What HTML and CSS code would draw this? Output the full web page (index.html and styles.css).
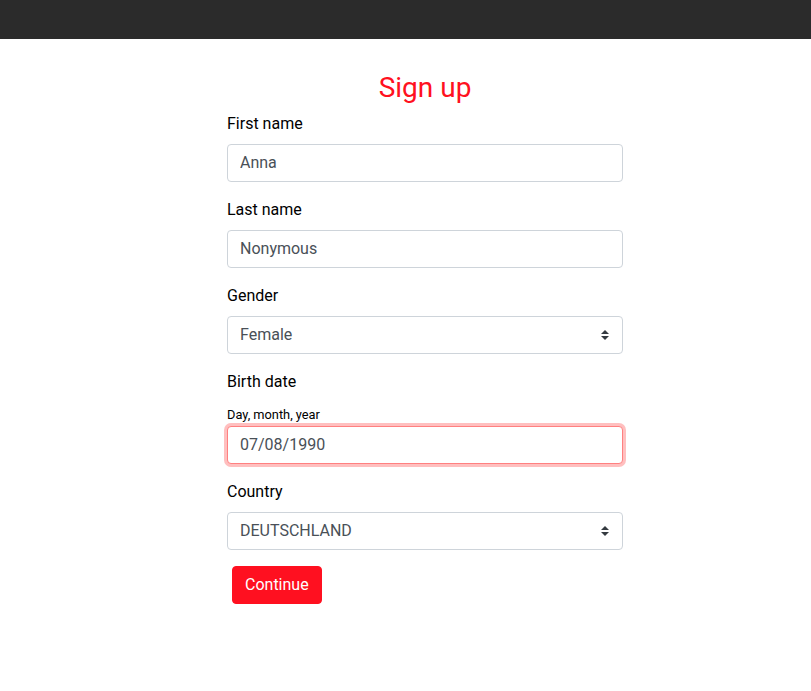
FILE: index.html
```html
<!DOCTYPE html>
<html lang="en">
<head>
<meta charset="utf-8">
<title>Sign up</title>
<link rel="stylesheet" href="styles.css">
</head>
<body>
<header class="topbar"></header>
<main class="page">
  <form class="signup">
    <h1 class="title">Sign up</h1>
    <div class="group">
      <label class="label" for="first">First name</label>
      <input class="control" id="first" type="text" value="Anna">
    </div>
    <div class="group">
      <label class="label" for="last">Last name</label>
      <input class="control" id="last" type="text" value="Nonymous">
    </div>
    <div class="group">
      <label class="label" for="gender">Gender</label>
      <div class="select">
        <span class="select-value">Female</span>
        <svg class="caret" width="8" height="10" viewBox="0 0 8 10"><path d="M4 0 L8 4 H0 Z M0 6 H8 L4 10 Z" fill="#343a40"/></svg>
      </div>
    </div>
    <div class="group">
      <label class="label" for="birth">Birth date</label>
      <small class="hint">Day, month, year</small>
      <input class="control focused" id="birth" type="text" value="07/08/1990">
    </div>
    <div class="group">
      <label class="label" for="country">Country</label>
      <div class="select">
        <span class="select-value">DEUTSCHLAND</span>
        <svg class="caret" width="8" height="10" viewBox="0 0 8 10"><path d="M4 0 L8 4 H0 Z M0 6 H8 L4 10 Z" fill="#343a40"/></svg>
      </div>
    </div>
    <div class="actions">
      <button class="btn" type="button">Continue</button>
    </div>
  </form>
</main>
</body>
</html>
```
FILE: styles.css
```css
* { box-sizing: border-box; }
html, body { margin: 0; padding: 0; }
body {
  font-family: Roboto, "Liberation Sans", Arial, sans-serif;
  font-size: 16px;
  line-height: 1.5;
  color: #000;
  background: #fff;
}
.topbar {
  height: 39px;
  background: #2b2b2b;
}
.page {
  padding-top: 32px;
  padding-left: 227px;
}
.signup {
  width: 396px;
}
.title {
  margin: 0 0 7px;
  font-size: 28px;
  font-weight: 400;
  line-height: 1.2;
  color: #ff1020;
  text-align: center;
}
.group {
  margin-bottom: 16px;
}
.label {
  display: block;
  margin-bottom: 8px;
}
.hint {
  display: block;
  font-size: 12.8px;
  line-height: 19px;
  padding-top: 3px;
  margin-bottom: 2px;
}
.control, .select {
  display: block;
  width: 100%;
  height: 38px;
  padding: 6px 12px;
  font-family: inherit;
  font-size: 16px;
  line-height: 24px;
  color: #495057;
  background: #fff;
  border: 1px solid #ced4da;
  border-radius: 4px;
  outline: none;
}
.select {
  display: flex;
  align-items: center;
  justify-content: space-between;
  padding-right: 13px;
}
.focused {
  border-color: #ff8080;
  box-shadow: 0 0 0 3px rgba(255, 0, 0, 0.25);
}
.actions {
  padding-left: 5px;
}
.btn {
  height: 38px;
  padding: 6px 12px;
  font-family: inherit;
  font-size: 16px;
  line-height: 24px;
  color: #fff;
  background: #ff1020;
  border: 1px solid #ff1020;
  border-radius: 4px;
}
```
